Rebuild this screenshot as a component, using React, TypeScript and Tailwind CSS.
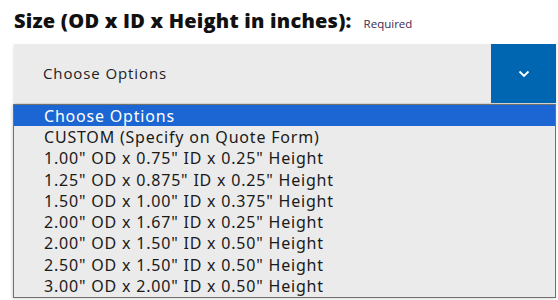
import React from 'react'

const options = [
  'Choose Options',
  'CUSTOM (Specify on Quote Form)',
  '1.00" OD x 0.75" ID x 0.25" Height',
  '1.25" OD x 0.875" ID x 0.25" Height',
  '1.50" OD x 1.00" ID x 0.375" Height',
  '2.00" OD x 1.67" ID x 0.25" Height',
  '2.00" OD x 1.50" ID x 0.50" Height',
  '2.50" OD x 1.50" ID x 0.50" Height',
  '3.00" OD x 2.00" ID x 0.50" Height',
]

export default function App() {
  return (
    <div className="w-[558px] h-[300px] overflow-hidden bg-white relative" style={{ fontFamily: '"Open Sans", sans-serif' }}>
      <div className="pl-[14px] pt-[7px] flex items-baseline gap-[12px]">
        <h2 className="text-[20px] font-extrabold text-[#111] leading-[27px] tracking-[0.22px]">
          Size (OD x ID x Height in inches):
        </h2>
        <span className="text-[11.5px] text-[#3d2a52]">Required</span>
      </div>

      <div className="relative mt-[10px] ml-[14px] mr-[2px] h-[59px] flex bg-[#ebebeb] shadow-[0_2px_3px_rgba(0,0,0,0.18)]">
        <div className="flex-1 flex items-center pl-[29px] text-[15px] tracking-[0.9px] text-[#222]">Choose Options</div>
        <div className="w-[65px] bg-[#0066b1] flex items-center justify-center">
          <svg width="12" height="8" viewBox="0 0 12 8" fill="none">
            <path d="M1.5 1.5 L6 6 L10.5 1.5" stroke="white" strokeWidth="1.8" />
          </svg>
        </div>
      </div>

      <div className="mt-[195px] ml-[44px] text-[14px] text-[#222] leading-none">SPECIFICATIONS</div>

      <ul
        className="absolute left-[13px] top-[104px] w-[543px] border border-[#707070] bg-[#ebebeb] shadow-[-1px_1px_3px_rgba(0,0,0,0.15)]"
        style={{ fontFamily: '"Noto Sans", sans-serif' }}
      >
        {options.map((o, i) => (
          <li
            key={o}
            className={
              'h-[21.3px] flex items-center pl-[30px] text-[16px] tracking-[0.8px] ' +
              (i === 0 ? 'bg-[#1b66d2] text-white' : 'text-[#1a1a1a]')
            }
          >
            {o}
          </li>
        ))}
      </ul>
    </div>
  )
}
